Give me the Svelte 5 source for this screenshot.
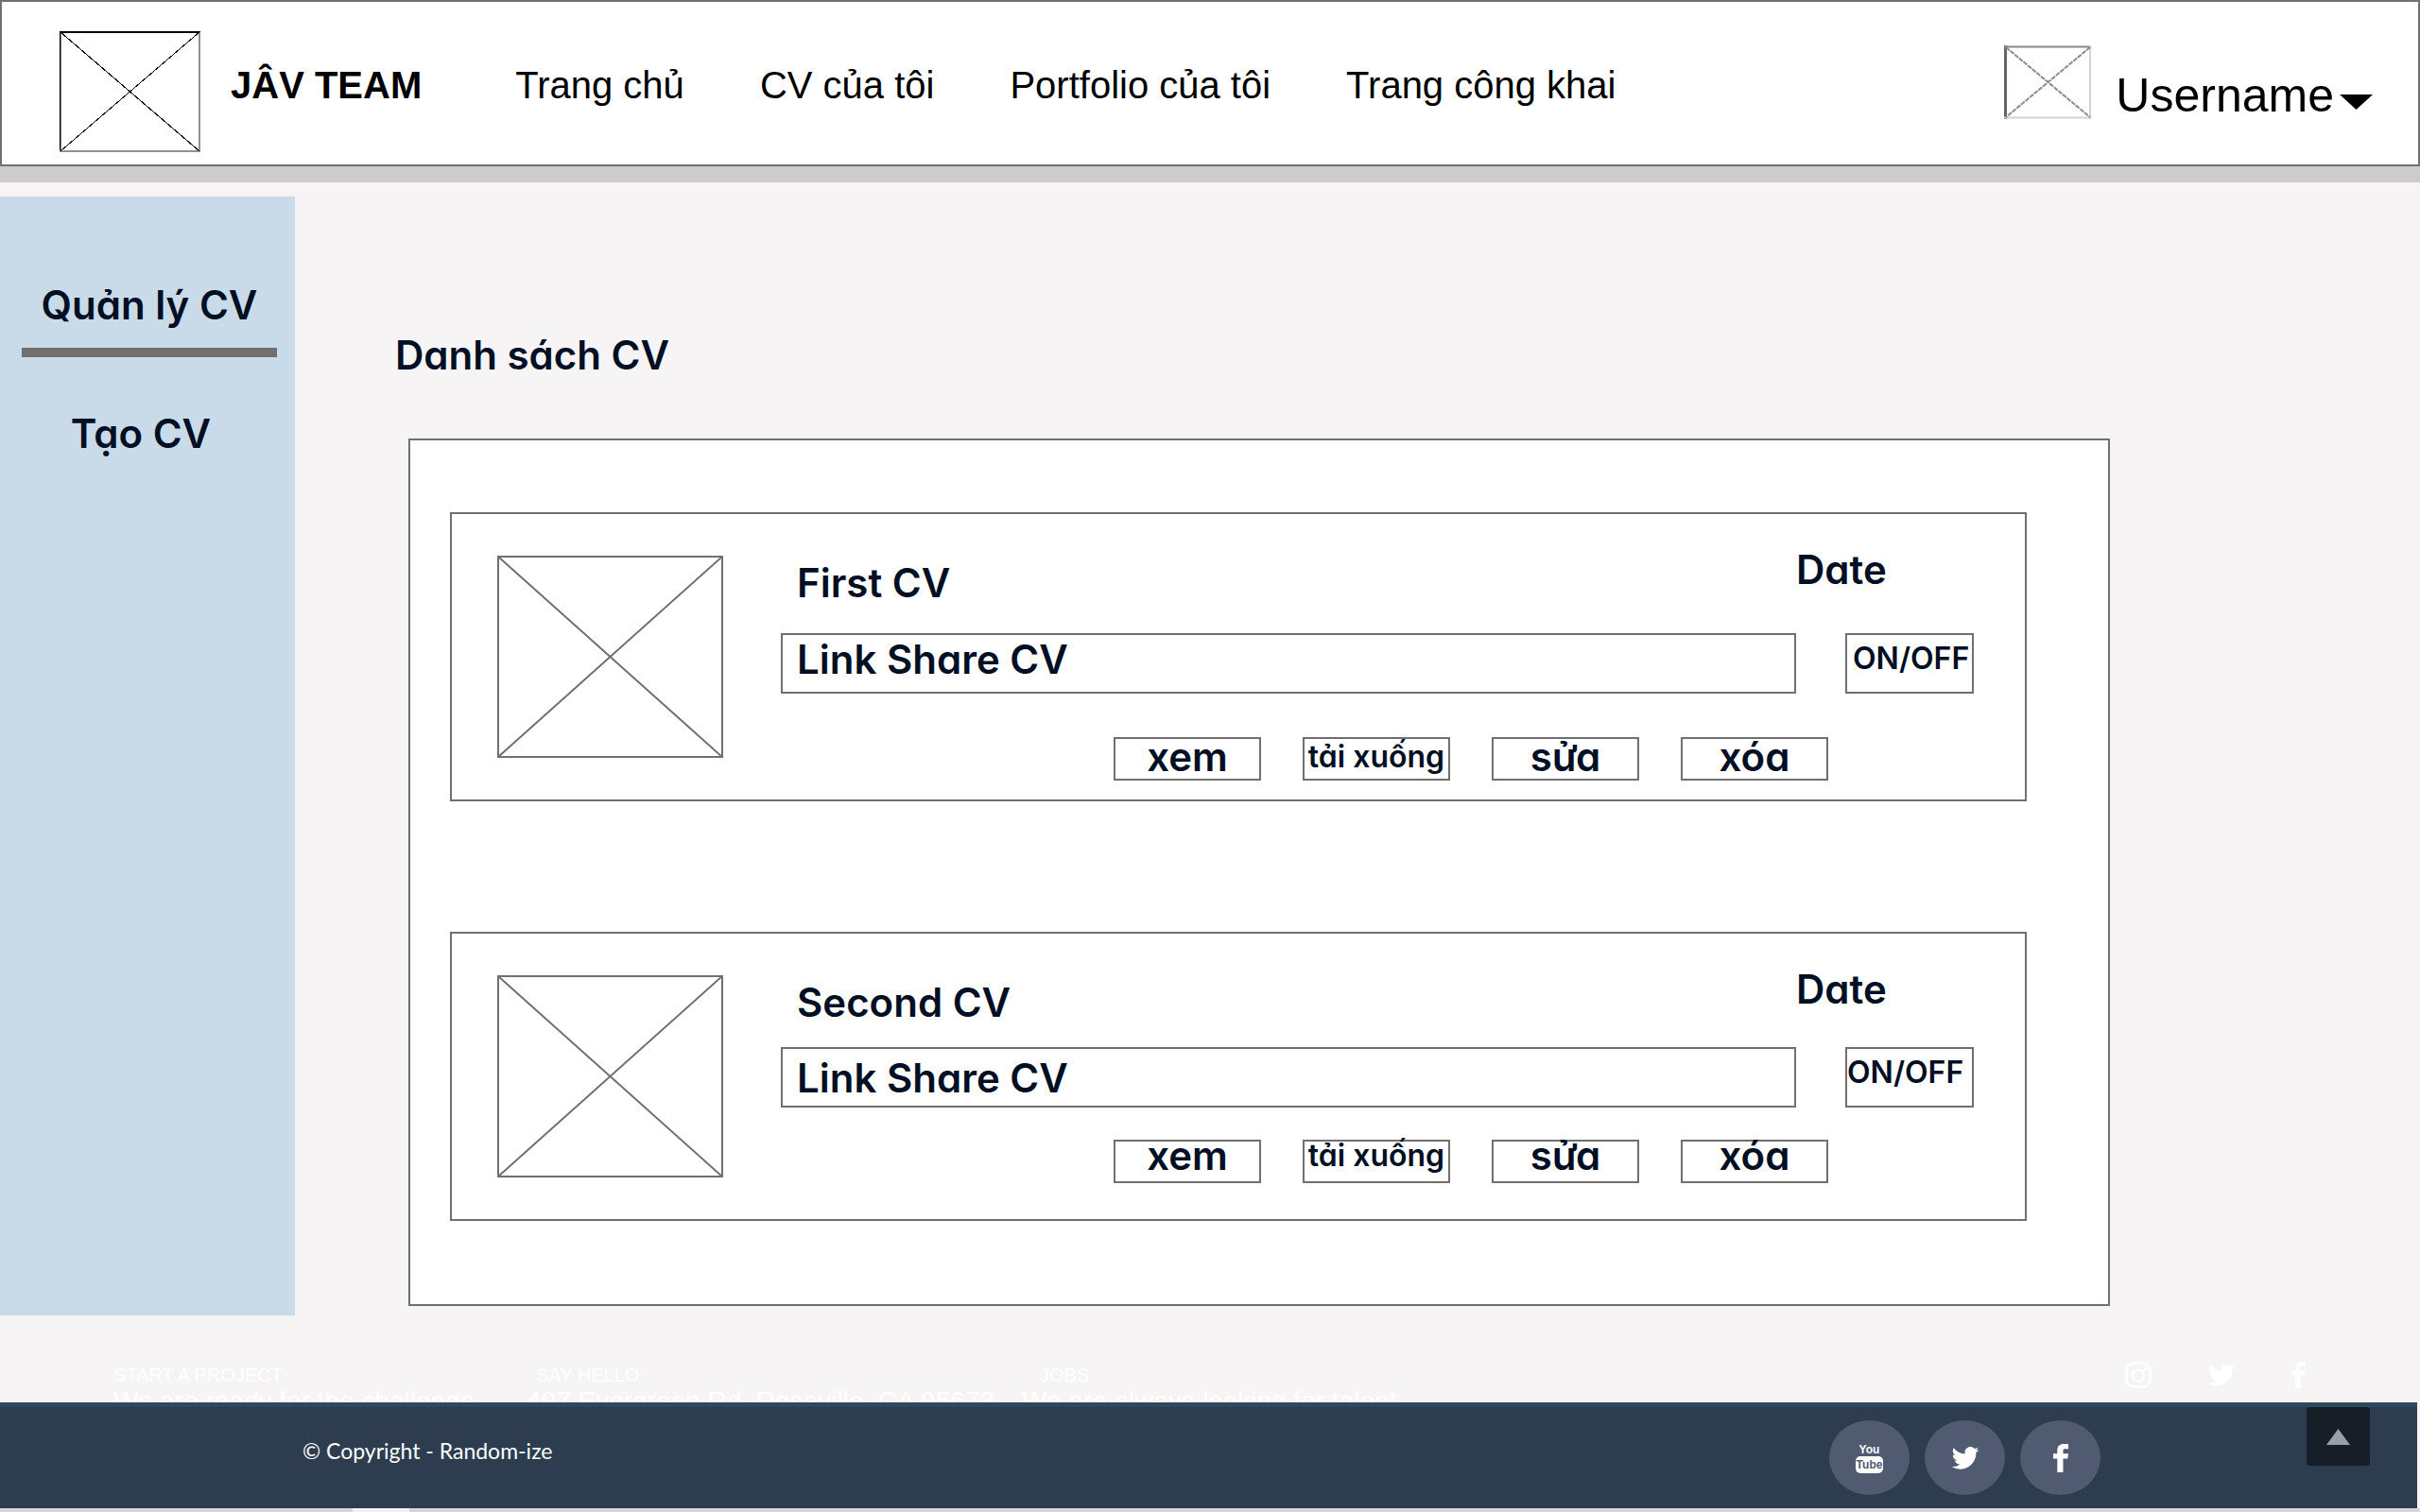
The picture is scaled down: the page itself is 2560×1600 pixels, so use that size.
<script>
  const navLinks = ['Trang chủ', 'CV của tôi', 'Portfolio của tôi', 'Trang công khai'];

  const items = [
    { id: 'first', title: 'First CV', compact: false },
    { id: 'second', title: 'Second CV', compact: true }
  ];

  const actions = [
    { label: 'xem', small: false },
    { label: 'tải xuống', small: true },
    { label: 'sửa', small: false },
    { label: 'xóa', small: false }
  ];
</script>

{#snippet twitter()}
  <path
    d="M24 2.4a9.8 9.8 0 0 1-2.8.8A4.9 4.9 0 0 0 23.3.5a9.9 9.9 0 0 1-3.1 1.2A4.9 4.9 0 0 0 11.8 6.200A14 14 0 0 1 1.700 1a4.900 4.900 0 0 0 1.500 6.600A4.900 4.900 0 0 1 1 7v.1a4.900 4.900 0 0 0 3.900 4.800a5 5 0 0 1-2.200.1a4.900 4.900 0 0 0 4.600 3.400A9.900 9.900 0 0 1 0 17.500a14 14 0 0 0 7.500 2.200c9.100 0 14-7.500 14-14v-.6A10 10 0 0 0 24 2.400z"
  />
{/snippet}

{#snippet facebook()}
  <path d="M13 0v5h-3c-1 0-1.500.6-1.500 1.700V9.500H13l-.6 5H8.500V28h-5V14.500H0v-5h3.500V6C3.500 2.200 5.700 0 9.200 0z" />
{/snippet}

<div class="page">
  <header class="topbar">
    <svg class="logo" viewBox="0 0 149 128" role="img" aria-label="Logo">
      <path d="M0.500 0V128M0 1H149" stroke="#000" stroke-width="2" />
      <path d="M148 1V127M0 127H149" stroke="#909090" stroke-width="2" />
      <path d="M1 1L148 127M148 1L1 127" stroke="#000" stroke-width="1" shape-rendering="crispEdges" />
    </svg>
    <strong class="brand">JÂV TEAM</strong>
    <nav class="nav" aria-label="Menu">
      {#each navLinks as link}
        <a href="#top">{link}</a>
      {/each}
    </nav>
    <button class="user" type="button">
      <svg class="avatar" viewBox="0 0 92 78" aria-hidden="true">
        <path d="M1.500 0V78" stroke="#666" stroke-width="3" />
        <path d="M0 1.500H92" stroke="#888" stroke-width="2" />
        <path d="M91 0V78M0 76.500H92" stroke="#d4d4d4" stroke-width="2" />
        <path d="M2 2L91 76M91 2L2 76" stroke="#8c8c8c" stroke-width="2" stroke-dasharray="5 1" />
      </svg>
      <span>Username</span>
      <svg class="caret" viewBox="0 0 35 16" aria-hidden="true"><path d="M0 0H35L17.500 16z" /></svg>
    </button>
  </header>
  <div class="band"></div>

  <div class="main">
    <aside class="sidebar">
      <a class="side-link active" href="#manage">Quản lý CV</a>
      <a class="side-link" href="#create">Tạo CV</a>
    </aside>

    <main class="content">
      <h1>Danh sách CV</h1>
      <section class="panel">
        {#each items as item (item.id)}
          <article class="card" class:compact={item.compact}>
            <svg class="thumb" viewBox="0 0 239 214" role="img" aria-label={item.title}>
              <path
                d="M1 1H238V213H1zM1 1L238 213M238 1L1 213"
                fill="none"
                stroke="#707070"
                stroke-width="2"
              />
            </svg>
            <div class="body">
              <div class="head">
                <h2>{item.title}</h2>
                <span class="date">Date</span>
              </div>
              <div class="share">
                <input type="text" value="Link Share CV" aria-label="Link Share CV" />
                <button class="toggle" type="button">ON/OFF</button>
              </div>
              <div class="actions">
                {#each actions as action}
                  <button type="button" class:small={action.small}>{action.label}</button>
                {/each}
              </div>
            </div>
          </article>
        {/each}
      </section>
    </main>
  </div>

  <section class="info">
    <div class="col start">
      <h3>START A PROJECT</h3>
      <p>We are ready for the challenge</p>
    </div>
    <div class="col hello">
      <h3>SAY HELLO</h3>
      <p>497 Evergreen Rd. Roseville, CA 95673</p>
    </div>
    <div class="col jobs">
      <h3>JOBS</h3>
      <p>We are always looking for talent</p>
    </div>
    <div class="links">
      <a href="#instagram" aria-label="Instagram">
        <svg width="28" height="28" viewBox="0 0 28 28" fill="none" stroke="#fff" stroke-width="2.500">
          <rect x="1.500" y="1.500" width="25" height="25" rx="7" />
          <circle cx="14" cy="14.500" r="6" />
          <circle cx="21.500" cy="7" r="1" />
        </svg>
      </a>
      <a href="#twitter" aria-label="Twitter">
        <svg width="28" height="24" viewBox="0 0 24 20" fill="#fff">{@render twitter()}</svg>
      </a>
      <a href="#facebook" aria-label="Facebook">
        <svg width="15" height="28" viewBox="0 0 13 28" preserveAspectRatio="none" fill="#fff">{@render facebook()}</svg>
      </a>
    </div>
  </section>

  <footer class="footer">
    <p class="copyright">© Copyright - Random-ize</p>
    <div class="social">
      <a href="#youtube" aria-label="YouTube">
        <span class="youtube"><span class="you">You</span><span class="tube">Tube</span></span>
      </a>
      <a href="#twitter" aria-label="Twitter">
        <svg width="30" height="24" viewBox="0 0 24 20" fill="#fff">{@render twitter()}</svg>
      </a>
      <a href="#facebook" aria-label="Facebook">
        <svg width="16" height="30" viewBox="0 0 13 28" preserveAspectRatio="none" fill="#fff">{@render facebook()}</svg>
      </a>
    </div>
    <button class="to-top" type="button" aria-label="Top">
      <svg width="25" height="17" viewBox="0 0 25 17"><path d="M12.500 0L25 17H0z" fill="#989fa8" /></svg>
    </button>
  </footer>
  <div class="edge"></div>
</div>

<style>
  :global(body) {
    margin: 0;
    background: #f6f4f5;
  }

  .page {
    display: flex;
    flex-direction: column;
    min-height: 100vh;
    color: #000f24;
    font-family: Inter, 'Open Sans', sans-serif;
    font-feature-settings: 'cv11' 1;
  }

  .page :is(h1, h2, h3, p) {
    margin: 0;
    font-size: inherit;
    font-weight: inherit;
  }

  a {
    color: inherit;
    text-decoration: none;
  }

  button,
  input {
    box-sizing: border-box;
    margin: 0;
    padding: 0;
    border: 0;
    border-radius: 0;
    background: none;
    color: inherit;
    font: inherit;
    font-feature-settings: inherit;
  }

  svg {
    display: block;
    flex: none;
  }

  .topbar {
    display: flex;
    align-items: center;
    box-sizing: border-box;
    height: 176px;
    padding: 4px 48px 0 61px;
    border: 2px solid #707070;
    background: #fff;
    color: #000;
    font-family: 'Liberation Sans', Arial, sans-serif;
    font-size: 40px;
    line-height: 48px;
  }

  .logo {
    width: 149px;
    height: 128px;
    margin-top: 14px;
  }

  .brand {
    margin-left: 32px;
    white-space: nowrap;
  }

  .nav {
    display: flex;
    gap: 80px;
    margin-left: 99px;
    white-space: nowrap;
  }

  .user {
    display: flex;
    align-items: flex-end;
    margin: 0 0 6px auto;
    font-size: 50px;
    line-height: 50px;
  }

  .avatar {
    width: 92px;
    height: 78px;
    margin-right: 26px;
  }

  .caret {
    width: 35px;
    height: 16px;
    margin: 0 0 10px 6px;
  }

  .band {
    height: 17px;
    margin-bottom: 15px;
    background: #cdcbcc;
  }

  .main {
    display: flex;
    font-size: 42px;
    font-weight: 600;
    line-height: 48px;
  }

  .sidebar {
    display: flex;
    flex: none;
    flex-direction: column;
    gap: 57px;
    box-sizing: border-box;
    width: 312px;
    padding: 91px 19px 0 23px;
    background: #c9dbe8;
    text-align: center;
    white-space: nowrap;
  }

  .side-link {
    padding-right: 18px;
  }

  .side-link.active {
    padding: 0 0 21px;
    border-bottom: 10px solid #707070;
  }

  .content {
    flex: 1;
    min-width: 0;
    padding: 144px 328px 10px 106px;
  }

  .panel {
    display: flex;
    flex-direction: column;
    gap: 138px;
    margin: 64px 0 0 14px;
    padding: 76px 86px 88px 42px;
    border: 2px solid #707070;
    background: #fff;
  }

  .card {
    display: flex;
    gap: 61px;
    box-sizing: border-box;
    min-height: 306px;
    padding: 35px 54px 20px 48px;
    border: 2px solid #707070;
  }

  .thumb {
    width: 239px;
    height: 214px;
    margin-top: 9px;
  }

  .body {
    flex: 1;
    min-width: 0;
  }

  .head {
    display: flex;
    justify-content: space-between;
  }

  .head h2 {
    padding: 14px 0 0 17px;
  }

  .date {
    width: 188px;
  }

  .share {
    display: grid;
    grid-template-columns: 1fr 136px;
    gap: 52px;
    margin-top: 29px;
  }

  .share input,
  .toggle {
    height: 64px;
    border: 2px solid #707070;
  }

  .share input {
    width: 100%;
    padding: 0 0 10px 15px;
  }

  .toggle {
    padding: 0 0 10px 6px;
    font-size: 32px;
    text-align: left;
    white-space: nowrap;
  }

  .actions {
    display: flex;
    gap: 44px;
    margin: 46px 0 0 352px;
  }

  .actions button {
    width: 156px;
    height: 46px;
    padding-bottom: 4px;
    border: 2px solid #707070;
    line-height: 36px;
    white-space: nowrap;
  }

  .actions .small {
    font-size: 32px;
  }

  .compact .share {
    margin-top: 23px;
  }

  .compact input {
    padding-bottom: 0;
  }

  .compact .toggle {
    padding-left: 0;
  }

  .compact .actions {
    margin-top: 34px;
  }

  .compact .actions button {
    padding-bottom: 12px;
    line-height: 30px;
  }

  .info {
    display: flex;
    box-sizing: border-box;
    height: 92px;
    padding: 49px 121px 0 120px;
    overflow: hidden;
    color: #fff;
    font-family: 'Liberation Sans', Arial, sans-serif;
    white-space: nowrap;
  }

  .page .info h3 {
    font-size: 20px;
    line-height: 28px;
  }

  .page .info p {
    font-size: 28px;
    line-height: 28px;
  }

  .col.start {
    width: 437px;
  }

  .col.hello {
    width: 524px;
  }

  .col.hello h3 {
    padding-left: 10px;
  }

  .col.jobs h3 {
    padding-left: 19px;
  }

  .links {
    display: flex;
    align-items: center;
    gap: 60px;
    height: 28px;
    margin-left: auto;
  }

  .footer {
    display: flex;
    align-items: flex-start;
    box-sizing: border-box;
    height: 112px;
    margin-right: 3px;
    padding: 0 50px 0 320px;
    border-top: 5px solid #30485c;
    background: #2d3d4f;
    color: #fff;
  }

  .page .copyright {
    padding-top: 30px;
    font-family: Lato, sans-serif;
    font-size: 23px;
    line-height: 32px;
  }

  .social {
    display: flex;
    gap: 16px;
    margin: 14px 218px 0 auto;
  }

  .social a {
    display: flex;
    align-items: center;
    justify-content: center;
    width: 85px;
    height: 79px;
    border-radius: 50%;
    background: #505a70;
  }

  .youtube {
    display: flex;
    flex-direction: column;
    align-items: center;
    font-family: 'Liberation Sans Narrow', 'Liberation Sans', sans-serif;
    font-size: 12px;
    font-weight: 700;
    line-height: 14px;
  }

  .tube {
    width: 29px;
    border-radius: 5px;
    background: #fff;
    color: #505a70;
    line-height: 18px;
    text-align: center;
  }

  .to-top {
    display: flex;
    align-items: center;
    justify-content: center;
    width: 67px;
    height: 62px;
    border-radius: 3px;
    background: #161e27;
  }

  .edge {
    flex: 1;
    min-height: 4px;
    background: linear-gradient(90deg, #d8d4de 373px, #f3f0f8 373px 433px, #d8d4de 433px);
  }
</style>
